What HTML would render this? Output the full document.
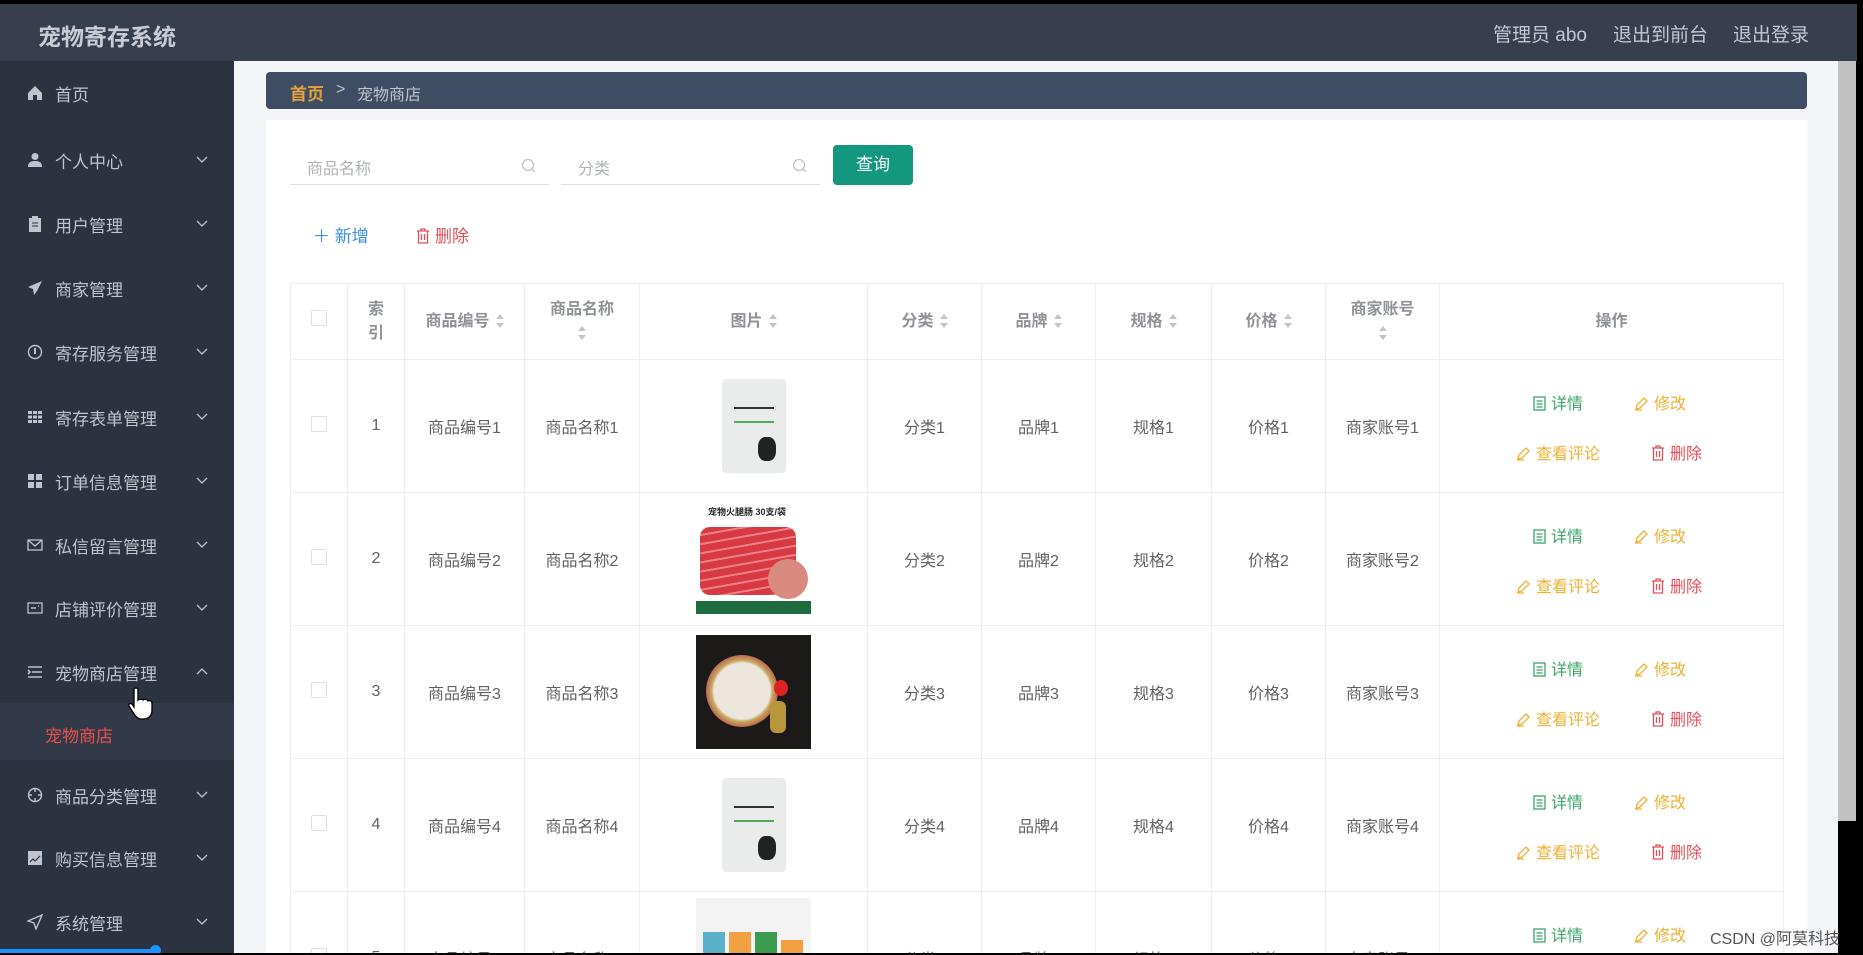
<!DOCTYPE html>
<html><head><meta charset="utf-8">
<style>
*{box-sizing:border-box;margin:0;padding:0}
html,body{width:1863px;height:955px;overflow:hidden}
body{background:#000;font-family:"Liberation Sans","Noto Sans CJK SC",sans-serif}
#root{position:relative;width:1863px;height:955px;overflow:hidden;background:#000}
.abs{position:absolute}
#hdr{left:0;top:4px;width:1857px;height:57px;background:#373f4f}
#title{left:38px;top:18px;font-size:23px;font-weight:bold;color:#c9ccd3}
.hr{top:20px;font-size:19px;color:#c3c8d2}
#side{left:0;top:61px;width:234px;height:892px;background:#2b3240}
.mi{position:absolute;left:0;width:234px;height:20px;color:#c0c4cc;font-size:17px}
.mi .ic{position:absolute;left:27px;top:2px;width:16px;height:16px}
.mi .tx{position:absolute;left:55px;top:-2px}
.mi .ch{position:absolute;left:196px;top:4px;width:12px;height:12px}
#main{left:234px;top:61px;width:1604px;height:892px;background:#f4f5f9}
#bc{left:266px;top:72px;width:1541px;height:37px;background:#3e4d63;border-radius:4px}
#card{left:266px;top:120px;width:1541px;height:833px;background:#fff}
.inp{top:145px;height:40px;border-bottom:1px solid #dcdfe6;color:#b0b3b9;font-size:16px}
#tw{position:absolute;left:290px;top:283px;width:1494px;height:670px;overflow:hidden}
table{border-collapse:collapse;table-layout:fixed;font-size:16px;color:#606266}
td,th{border:1px solid #ebeef5;text-align:center;vertical-align:middle;background:#fff}
th{height:76px;color:#8f9297;font-weight:bold;font-size:16px;line-height:24px}
td{height:133px;position:relative}
.sort{display:inline-block;vertical-align:middle;margin-left:6px;width:8px;height:14px;position:relative}
.sort:before{content:"";position:absolute;left:0;top:0;border:4px solid transparent;border-bottom:5px solid #c0c4cc;border-top:0}
.sort:after{content:"";position:absolute;left:0;bottom:0;border:4px solid transparent;border-top:5px solid #c0c4cc;border-bottom:0}
.cb{display:inline-block;width:16px;height:16px;border:1px solid #dcdfe6;border-radius:2px;background:#fff}
.op{position:absolute;font-size:16px;white-space:nowrap}
.op svg{vertical-align:-2px;margin-right:5px}
#sb{left:1838px;top:61px;width:18px;height:760px;background:#c1c1c1}
</style></head><body><div id="root">
<div id="hdr" class="abs"></div>
<div id="title" class="abs">宠物寄存系统</div>
<div class="abs hr" style="left:1493px">管理员 abo</div>
<div class="abs hr" style="left:1613px">退出到前台</div>
<div class="abs hr" style="left:1733px">退出登录</div>

<div id="side" class="abs">
<div class="abs" style="left:0;top:642px;width:234px;height:57px;background:#323a4a"></div>
</div>
<div class="abs" style="left:0;top:0;width:234px;height:955px">
<div class="mi" style="top:83px"><svg class="ic" viewBox="0 0 16 16"><path d="M8 1L1 8v7h5v-5h4v5h5V8z" fill="#c0c4cc"/></svg><span class="tx">首页</span></div>
<div class="mi" style="top:150px"><svg class="ic" viewBox="0 0 16 16"><circle cx="8" cy="4.5" r="3.5" fill="#c0c4cc"/><path d="M1 15c0-5 3-6 7-6s7 1 7 6z" fill="#c0c4cc"/></svg><span class="tx">个人中心</span><svg class="ch" viewBox="0 0 12 12"><path d="M1 3l5 5 5-5" stroke="#c0c4cc" fill="none" stroke-width="1.3"/></svg></div>
<div class="mi" style="top:214px"><svg class="ic" viewBox="0 0 16 16"><rect x="2" y="2" width="12" height="14" fill="#c0c4cc"/><rect x="5" y="0" width="6" height="3" fill="#c0c4cc"/><path d="M5 7h6M5 10h6" stroke="#2b3240"/></svg><span class="tx">用户管理</span><svg class="ch" viewBox="0 0 12 12"><path d="M1 3l5 5 5-5" stroke="#c0c4cc" fill="none" stroke-width="1.3"/></svg></div>
<div class="mi" style="top:278px"><svg class="ic" viewBox="0 0 16 16"><path d="M15 1L1 7l5 2 1 6 3-4z" fill="#c0c4cc"/></svg><span class="tx">商家管理</span><svg class="ch" viewBox="0 0 12 12"><path d="M1 3l5 5 5-5" stroke="#c0c4cc" fill="none" stroke-width="1.3"/></svg></div>
<div class="mi" style="top:342px"><svg class="ic" viewBox="0 0 16 16"><circle cx="8" cy="8" r="6.5" stroke="#c0c4cc" fill="none" stroke-width="1.4"/><path d="M8 4v6" stroke="#c0c4cc" stroke-width="2"/></svg><span class="tx">寄存服务管理</span><svg class="ch" viewBox="0 0 12 12"><path d="M1 3l5 5 5-5" stroke="#c0c4cc" fill="none" stroke-width="1.3"/></svg></div>
<div class="mi" style="top:407px"><svg class="ic" viewBox="0 0 16 16"><g fill="#c0c4cc"><rect x="1" y="2" width="4" height="3"/><rect x="6" y="2" width="4" height="3"/><rect x="11" y="2" width="4" height="3"/><rect x="1" y="6.5" width="4" height="3"/><rect x="6" y="6.5" width="4" height="3"/><rect x="11" y="6.5" width="4" height="3"/><rect x="1" y="11" width="4" height="3"/><rect x="6" y="11" width="4" height="3"/><rect x="11" y="11" width="4" height="3"/></g></svg><span class="tx">寄存表单管理</span><svg class="ch" viewBox="0 0 12 12"><path d="M1 3l5 5 5-5" stroke="#c0c4cc" fill="none" stroke-width="1.3"/></svg></div>
<div class="mi" style="top:471px"><svg class="ic" viewBox="0 0 16 16"><g fill="#c0c4cc"><rect x="1" y="1" width="6" height="6"/><rect x="9" y="1" width="6" height="6"/><rect x="1" y="9" width="6" height="6"/><rect x="9" y="9" width="6" height="6"/></g></svg><span class="tx">订单信息管理</span><svg class="ch" viewBox="0 0 12 12"><path d="M1 3l5 5 5-5" stroke="#c0c4cc" fill="none" stroke-width="1.3"/></svg></div>
<div class="mi" style="top:535px"><svg class="ic" viewBox="0 0 16 16"><rect x="1" y="3" width="14" height="10" stroke="#c0c4cc" fill="none" stroke-width="1.3"/><path d="M1 3l7 6 7-6" stroke="#c0c4cc" fill="none" stroke-width="1.3"/></svg><span class="tx">私信留言管理</span><svg class="ch" viewBox="0 0 12 12"><path d="M1 3l5 5 5-5" stroke="#c0c4cc" fill="none" stroke-width="1.3"/></svg></div>
<div class="mi" style="top:598px"><svg class="ic" viewBox="0 0 16 16"><rect x="1" y="3" width="14" height="10" stroke="#c0c4cc" fill="none" stroke-width="1.3"/><path d="M4 8h5M11 6h1" stroke="#c0c4cc" stroke-width="1.5"/></svg><span class="tx">店铺评价管理</span><svg class="ch" viewBox="0 0 12 12"><path d="M1 3l5 5 5-5" stroke="#c0c4cc" fill="none" stroke-width="1.3"/></svg></div>
<div class="mi" style="top:662px"><svg class="ic" viewBox="0 0 16 16"><path d="M1 3h14M5 8h10M1 13h14M1 6l2 2-2 2" stroke="#c0c4cc" fill="none" stroke-width="1.6"/></svg><span class="tx">宠物商店管理</span><svg class="ch" viewBox="0 0 12 12"><path d="M1 8l5-5 5 5" stroke="#c0c4cc" fill="none" stroke-width="1.3"/></svg></div>
<div class="abs" style="left:45px;top:722px;font-size:17px;color:#e8504a">宠物商店</div>
<div class="mi" style="top:785px"><svg class="ic" viewBox="0 0 16 16"><circle cx="8" cy="8" r="6.5" stroke="#c0c4cc" fill="none" stroke-width="1.4"/><path d="M8 1v4M8 11v4M1 8h4M11 8h4" stroke="#c0c4cc" stroke-width="1.4"/></svg><span class="tx">商品分类管理</span><svg class="ch" viewBox="0 0 12 12"><path d="M1 3l5 5 5-5" stroke="#c0c4cc" fill="none" stroke-width="1.3"/></svg></div>
<div class="mi" style="top:848px"><svg class="ic" viewBox="0 0 16 16"><rect x="1" y="1" width="14" height="14" fill="#c0c4cc"/><path d="M3 12l3-3 2 2 5-5" stroke="#2b3240" fill="none" stroke-width="1.2"/></svg><span class="tx">购买信息管理</span><svg class="ch" viewBox="0 0 12 12"><path d="M1 3l5 5 5-5" stroke="#c0c4cc" fill="none" stroke-width="1.3"/></svg></div>
<div class="mi" style="top:912px"><svg class="ic" viewBox="0 0 16 16"><path d="M15 1L1 7l6 2 2 6z" stroke="#c0c4cc" fill="none" stroke-width="1.4"/></svg><span class="tx">系统管理</span><svg class="ch" viewBox="0 0 12 12"><path d="M1 3l5 5 5-5" stroke="#c0c4cc" fill="none" stroke-width="1.3"/></svg></div>
</div>
<svg class="abs" style="left:128px;top:686px" width="26" height="34" viewBox="0 0 26 34"><path d="M8 2c2 0 2 1 2 3v9c1-1 4-1 5 0 1-1 4-1 5 1 2-1 4 0 4 2v7c0 5-3 9-8 9h-3c-3 0-5-2-7-5l-5-8c-1-2 1-3 3-2l2 3V5c0-2 0-3 2-3z" fill="#fff" stroke="#000" stroke-width="1.3"/></svg>
<div class="abs" style="left:0;top:949px;width:155px;height:4px;background:#1e90ff"></div>
<div class="abs" style="left:150px;top:945px;width:11px;height:11px;border-radius:6px;background:#1e90ff"></div>

<div id="main" class="abs"></div>
<div id="bc" class="abs"><span class="abs" style="left:24px;top:8px;font-size:17px;font-weight:bold;color:#e6a23c">首页</span><span class="abs" style="left:70px;top:9px;font-size:16px;color:#c0c4cc">&gt;</span><span class="abs" style="left:91px;top:9px;font-size:16px;color:#c0c4cc">宠物商店</span></div>
<div id="card" class="abs"></div>
<div class="abs inp" style="left:290px;width:259px"><span class="abs" style="left:17px;top:10px">商品名称</span><svg class="abs" style="left:231px;top:13px" width="16" height="16" viewBox="0 0 16 16"><circle cx="7" cy="7" r="5.5" stroke="#c0c4cc" fill="none" stroke-width="1.3"/><path d="M11 11l3 3" stroke="#c0c4cc" stroke-width="1.3"/></svg></div>
<div class="abs inp" style="left:561px;width:259px"><span class="abs" style="left:17px;top:10px">分类</span><svg class="abs" style="left:231px;top:13px" width="16" height="16" viewBox="0 0 16 16"><circle cx="7" cy="7" r="5.5" stroke="#c0c4cc" fill="none" stroke-width="1.3"/><path d="M11 11l3 3" stroke="#c0c4cc" stroke-width="1.3"/></svg></div>
<div class="abs" style="left:833px;top:145px;width:80px;height:40px;background:#14977f;border-radius:4px;color:#fff;font-size:17px;text-align:center;line-height:40px">查询</div>
<div class="abs" style="left:313px;top:222px;font-size:17px;color:#3a8ee6">＋ 新增</div>
<div class="abs" style="left:416px;top:222px;font-size:17px;color:#e0505a"><svg width="14" height="16" viewBox="0 0 14 16" style="vertical-align:-2px;margin-right:5px"><path d="M1 3h12M5 3V1h4v2M2.5 3v12h9V3M5.5 6v6M8.5 6v6" stroke="#e0505a" fill="none" stroke-width="1.3"/></svg>删除</div>

<div id="tw"><table>
<colgroup><col style="width:57px"><col style="width:57px"><col style="width:120px"><col style="width:115px"><col style="width:228px"><col style="width:114px"><col style="width:114px"><col style="width:116px"><col style="width:114px"><col style="width:114px"><col style="width:344px"></colgroup>
<tr><th><span class="cb"></span></th><th>索<br>引</th><th>商品编号<span class="sort"></span></th><th>商品名称<br><span class="sort" style="margin:0"></span></th><th>图片<span class="sort"></span></th><th>分类<span class="sort"></span></th><th>品牌<span class="sort"></span></th><th>规格<span class="sort"></span></th><th>价格<span class="sort"></span></th><th>商家账号<br><span class="sort" style="margin:0"></span></th><th>操作</th></tr>
<tr><td><span class="cb"></span></td><td>1</td><td>商品编号1</td><td>商品名称1</td><td><div style="margin:0 auto;width:64px;height:94px;background:#e9ecea;border-radius:4px;position:relative"><div style="position:absolute;left:12px;top:28px;width:40px;height:16px;border-top:2px solid #333;border-bottom:2px solid #5a5"></div><div style="position:absolute;left:36px;top:58px;width:18px;height:24px;background:#222;border-radius:40%"></div></div></td><td>分类1</td><td>品牌1</td><td>规格1</td><td>价格1</td><td>商家账号1</td><td></td></tr>
<tr><td><span class="cb"></span></td><td>2</td><td>商品编号2</td><td>商品名称2</td><td><div style="margin:0 auto;width:115px;height:112px;background:#fff;position:relative"><div style="position:absolute;left:12px;top:2px;font-size:9px;color:#222;font-weight:bold">宠物火腿肠 30支/袋</div><div style="position:absolute;left:4px;top:24px;width:96px;height:68px;background:repeating-linear-gradient(170deg,#d83a44 0 7px,#f08088 7px 9px);border-radius:10px"></div><div style="position:absolute;left:72px;top:56px;width:40px;height:40px;border-radius:50%;background:#d98a80"></div><div style="position:absolute;left:0;top:98px;width:115px;height:13px;background:#1d6b3f"></div></div></td><td>分类2</td><td>品牌2</td><td>规格2</td><td>价格2</td><td>商家账号2</td><td></td></tr>
<tr><td><span class="cb"></span></td><td>3</td><td>商品编号3</td><td>商品名称3</td><td><div style="margin:0 auto;width:115px;height:114px;background:#1c1a18;position:relative"><div style="position:absolute;left:10px;top:20px;width:72px;height:72px;border-radius:50%;background:radial-gradient(#ece6dc 55%,#c8a860 60%,#b03040 80%)"></div><div style="position:absolute;left:78px;top:45px;width:14px;height:16px;border-radius:50%;background:#d22"></div><div style="position:absolute;left:74px;top:66px;width:16px;height:32px;background:#b8963a;border-radius:6px"></div></div></td><td>分类3</td><td>品牌3</td><td>规格3</td><td>价格3</td><td>商家账号3</td><td></td></tr>
<tr><td><span class="cb"></span></td><td>4</td><td>商品编号4</td><td>商品名称4</td><td><div style="margin:0 auto;width:64px;height:94px;background:#e9ecea;border-radius:4px;position:relative"><div style="position:absolute;left:12px;top:28px;width:40px;height:16px;border-top:2px solid #333;border-bottom:2px solid #5a5"></div><div style="position:absolute;left:36px;top:58px;width:18px;height:24px;background:#222;border-radius:40%"></div></div></td><td>分类4</td><td>品牌4</td><td>规格4</td><td>价格4</td><td>商家账号4</td><td></td></tr>
<tr><td><span class="cb"></span></td><td>5</td><td>商品编号5</td><td>商品名称5</td><td style="vertical-align:top"><div style="margin:6px auto 0;width:115px;height:110px;background:#f3f3f3;position:relative"><div style="position:absolute;left:7px;top:34px;width:22px;height:60px;background:#5ab0c8"></div><div style="position:absolute;left:33px;top:34px;width:22px;height:60px;background:#f0a040"></div><div style="position:absolute;left:59px;top:34px;width:22px;height:60px;background:#3a9a50"></div><div style="position:absolute;left:85px;top:42px;width:22px;height:52px;background:#f0a040"></div></div></td><td>分类5</td><td>品牌5</td><td>规格5</td><td>价格5</td><td>商家账号5</td><td></td></tr>
</table></div>

<div id="ops"></div>
<div class="abs" style="left:1807px;top:61px;width:31px;height:892px;background:#f4f5f9"></div>
<div id="sb" class="abs"></div>
<div class="abs" style="left:1710px;top:925px;font-size:16px;color:#555">CSDN @阿莫科技</div>
<div class="abs" style="left:1857px;top:0;width:6px;height:955px;background:#000"></div>
<div class="abs" style="left:0;top:953px;width:1863px;height:2px;background:#000"></div>
</div>
<script>
var doc='<svg width="13" height="15" viewBox="0 0 13 15"><rect x="1" y="1" width="11" height="13" stroke="#3aa56a" fill="none" stroke-width="1.3"/><path d="M3.5 5h6M3.5 8h6M3.5 11h6" stroke="#3aa56a" stroke-width="1.2"/></svg>';
var pen='<svg width="15" height="15" viewBox="0 0 15 15"><path d="M2 13l1-4 7-7 3 3-7 7zM1 14h7" stroke="#f0b030" fill="none" stroke-width="1.3"/></svg>';
var del='<svg width="14" height="16" viewBox="0 0 14 16"><path d="M1 3h12M5 3V1h4v2M2.5 3v12h9V3M5.5 6v6M8.5 6v6" stroke="#e0505a" fill="none" stroke-width="1.3"/></svg>';
var h='';for(var i=0;i<5;i++){var y=390+i*133;
h+='<div class="op" style="left:1533px;top:'+y+'px;color:#3aa56a">'+doc+'详情</div>';
h+='<div class="op" style="left:1634px;top:'+y+'px;color:#f0b030">'+pen+'修改</div>';
if(i<4){h+='<div class="op" style="left:1516px;top:'+(y+50)+'px;color:#f0b030">'+pen+'查看评论</div>';
h+='<div class="op" style="left:1651px;top:'+(y+50)+'px;color:#e0505a">'+del+'删除</div>';}}
document.getElementById('ops').innerHTML=h;
</script>
</body></html>
